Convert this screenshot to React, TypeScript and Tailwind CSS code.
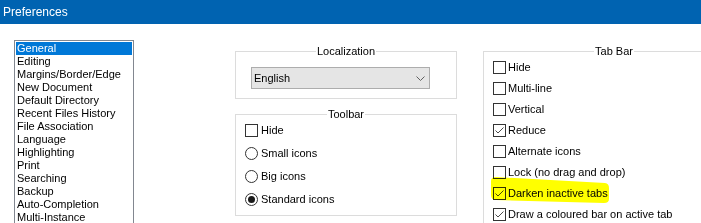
import React from "react";

const pages = [
  "General",
  "Editing",
  "Margins/Border/Edge",
  "New Document",
  "Default Directory",
  "Recent Files History",
  "File Association",
  "Language",
  "Highlighting",
  "Print",
  "Searching",
  "Backup",
  "Auto-Completion",
  "Multi-Instance",
  "Advanced",
];

const tabBar = [
  { label: "Hide", checked: false },
  { label: "Multi-line", checked: false },
  { label: "Vertical", checked: false },
  { label: "Reduce", checked: true },
  { label: "Alternate icons", checked: false },
  { label: "Lock (no drag and drop)", checked: false },
  { label: "Darken inactive tabs", checked: true, marked: true },
  { label: "Draw a coloured bar on active tab", checked: true },
];

const CheckBox = ({ checked }: { checked: boolean }) => (
  <span className="flex h-[13px] w-[13px] shrink-0 items-center justify-center border border-[#333333] bg-white">
    {checked && (
      <svg width="11" height="11" viewBox="0 0 11 11" fill="none">
        <path d="M1.5 5.5 L4 8 L9.5 2.5" stroke="#4a4a4a" strokeWidth="1" />
      </svg>
    )}
  </span>
);

const Radio = ({ checked }: { checked: boolean }) => (
  <span className="flex h-[13px] w-[13px] shrink-0 items-center justify-center rounded-full border border-[#333333] bg-white">
    {checked && <span className="h-[7px] w-[7px] rounded-full bg-[#1a1a1a]" />}
  </span>
);

export default function App() {
  return (
    <div className="h-[223px] w-[701px] overflow-hidden bg-white font-['Liberation_Sans',Arial,sans-serif] text-[11px] leading-[13px] text-black">
      {/* title bar */}
      <div className="h-[24px] bg-[#0063b1] pl-[3px] text-[12px] leading-[24px] text-white">Preferences</div>

      <div className="flex items-start pl-[14px] pt-[16px]">
        {/* page list */}
        <div className="w-[120px] shrink-0 border border-[#828790] bg-white p-[1px]">
          {pages.map((p, i) => (
            <div
              key={p}
              className={
                i === 0
                  ? "h-[13px] whitespace-nowrap bg-[#0078d7] pl-[1px] text-white"
                  : "h-[13px] whitespace-nowrap pl-[1px]"
              }
            >
              {p}
            </div>
          ))}
        </div>

        {/* middle column */}
        <div className="ml-[101px] mt-[5px] flex w-[222px] shrink-0 flex-col">
          <fieldset className="border border-[#dcdcdc] pb-[9px]">
            <legend className="mx-auto px-[1px] leading-[12px]">Localization</legend>
            <div className="ml-[15px] mt-[10px] flex h-[22px] w-[179px] items-center justify-between border border-[#adadad] bg-[#e5e5e5] pl-[2px] pr-[4px]">
              <span>English</span>
              <svg width="9" height="5" viewBox="0 0 9 5" fill="none">
                <path d="M0.5 0.5 L4.5 4.5 L8.5 0.5" stroke="#606060" strokeWidth="1" />
              </svg>
            </div>
          </fieldset>

          <fieldset className="mt-[9px] border border-[#dcdcdc] pb-[4px]">
            <legend className="mx-auto px-[1px] leading-[12px]">Toolbar</legend>
            <div className="-mt-[1px] flex flex-col pl-[9px]">
              <div className="flex h-[23px] items-center gap-[3px]">
                <CheckBox checked={false} />
                <span>Hide</span>
              </div>
              <div className="flex h-[23px] items-center gap-[3px]">
                <Radio checked={false} />
                <span>Small icons</span>
              </div>
              <div className="flex h-[23px] items-center gap-[3px]">
                <Radio checked={false} />
                <span>Big icons</span>
              </div>
              <div className="flex h-[23px] items-center gap-[3px]">
                <Radio checked />
                <span>Standard icons</span>
              </div>
            </div>
          </fieldset>
        </div>

        {/* tab bar column */}
        <fieldset className="ml-[26px] mt-[5px] w-[262px] shrink-0 border border-[#dcdcdc]">
          <legend className="mx-auto px-[1px] leading-[12px]">Tab Bar</legend>
          <div className="flex flex-col pl-[9px]">
            {tabBar.map((t) => (
              <div key={t.label} className="relative flex h-[21px] items-center gap-[2px] whitespace-nowrap">
                <CheckBox checked={t.checked} />
                <span>{t.label}</span>
                {t.marked && (
                  <svg
                    className="pointer-events-none absolute -left-[4px] -top-[7px] mix-blend-multiply"
                    width="122"
                    height="28"
                    viewBox="0 0 122 28"
                  >
                    <path
                      d="M2 5 Q2 1 7 1 L116 7 Q120 7.5 120 12 L120 23 Q120 27 115 27 L7 24 Q2 24 2 19 Z"
                      fill="#ffff00"
                    />
                  </svg>
                )}
              </div>
            ))}
          </div>
        </fieldset>
      </div>
    </div>
  );
}
